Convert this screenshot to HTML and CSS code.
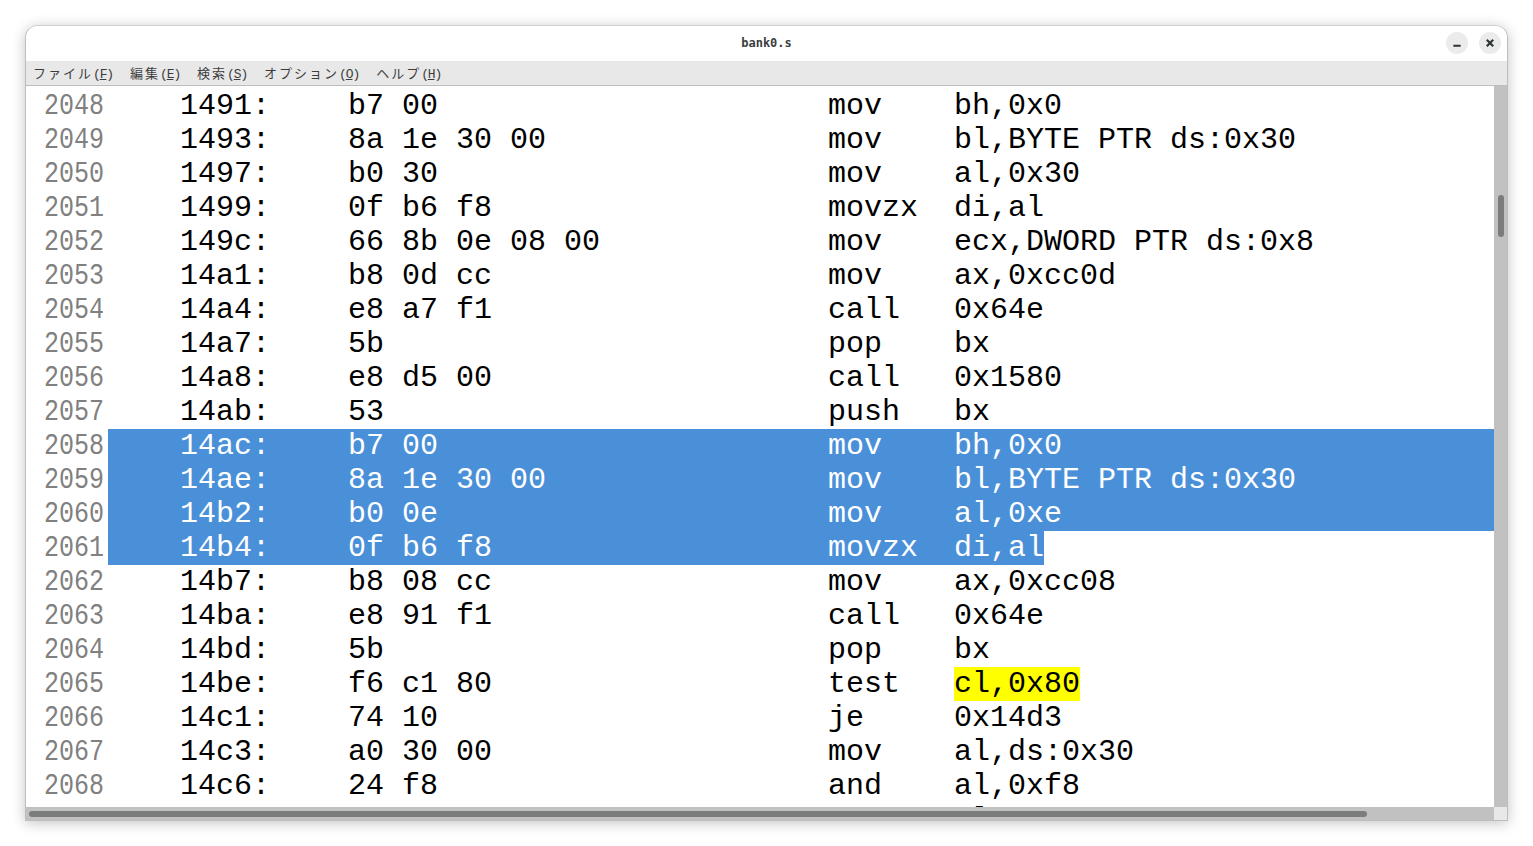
FILE: index.html
```
<!DOCTYPE html>
<html lang="ja">
<head>
<meta charset="utf-8">
<title>bank0.s</title>
<link rel="stylesheet" href="styles.css">
</head>
<body>
<div class="window">
  <header class="titlebar">
    <div class="title">bank0.s</div>
    <div class="controls">
      <button class="ctl"><svg width="24" height="24" viewBox="0 0 24 24"><path d="M8 15h8" stroke="#2e3436" stroke-width="2"/></svg></button>
      <button class="ctl"><svg width="24" height="24" viewBox="0 0 24 24"><path d="M8.5 8.5l7 7M15.5 8.5l-7 7" stroke="#2e3436" stroke-width="2.4"/></svg></button>
    </div>
  </header>
  <nav class="menubar">
    <span class="menu"><span class="jp">ファイル</span>(<u>F</u>)</span>
    <span class="menu"><span class="jp">編集</span>(<u>E</u>)</span>
    <span class="menu"><span class="jp">検索</span>(<u>S</u>)</span>
    <span class="menu"><span class="jp">オプション</span>(<u>O</u>)</span>
    <span class="menu"><span class="jp">ヘルプ</span>(<u>H</u>)</span>
  </nav>
  <div class="body">
    <main class="editor">
      <div class="row"><span class="ln"><span>2048</span></span><span class="code">    1491:	b7 00                		mov    bh,0x0</span></div>
      <div class="row"><span class="ln"><span>2049</span></span><span class="code">    1493:	8a 1e 30 00          		mov    bl,BYTE PTR ds:0x30</span></div>
      <div class="row"><span class="ln"><span>2050</span></span><span class="code">    1497:	b0 30                		mov    al,0x30</span></div>
      <div class="row"><span class="ln"><span>2051</span></span><span class="code">    1499:	0f b6 f8             		movzx  di,al</span></div>
      <div class="row"><span class="ln"><span>2052</span></span><span class="code">    149c:	66 8b 0e 08 00       		mov    ecx,DWORD PTR ds:0x8</span></div>
      <div class="row"><span class="ln"><span>2053</span></span><span class="code">    14a1:	b8 0d cc             		mov    ax,0xcc0d</span></div>
      <div class="row"><span class="ln"><span>2054</span></span><span class="code">    14a4:	e8 a7 f1             		call   0x64e</span></div>
      <div class="row"><span class="ln"><span>2055</span></span><span class="code">    14a7:	5b                   		pop    bx</span></div>
      <div class="row"><span class="ln"><span>2056</span></span><span class="code">    14a8:	e8 d5 00             		call   0x1580</span></div>
      <div class="row"><span class="ln"><span>2057</span></span><span class="code">    14ab:	53                   		push   bx</span></div>
      <div class="row"><span class="ln"><span>2058</span></span><span class="code sel">    14ac:	b7 00                		mov    bh,0x0</span></div>
      <div class="row"><span class="ln"><span>2059</span></span><span class="code sel">    14ae:	8a 1e 30 00          		mov    bl,BYTE PTR ds:0x30</span></div>
      <div class="row"><span class="ln"><span>2060</span></span><span class="code sel">    14b2:	b0 0e                		mov    al,0xe</span></div>
      <div class="row"><span class="ln"><span>2061</span></span><span class="code"><span class="sel-end">    14b4:	0f b6 f8             		movzx  di,al</span></span></div>
      <div class="row"><span class="ln"><span>2062</span></span><span class="code">    14b7:	b8 08 cc             		mov    ax,0xcc08</span></div>
      <div class="row"><span class="ln"><span>2063</span></span><span class="code">    14ba:	e8 91 f1             		call   0x64e</span></div>
      <div class="row"><span class="ln"><span>2064</span></span><span class="code">    14bd:	5b                   		pop    bx</span></div>
      <div class="row"><span class="ln"><span>2065</span></span><span class="code">    14be:	f6 c1 80             		test   <span class="match">cl,0x80</span></span></div>
      <div class="row"><span class="ln"><span>2066</span></span><span class="code">    14c1:	74 10                		je     0x14d3</span></div>
      <div class="row"><span class="ln"><span>2067</span></span><span class="code">    14c3:	a0 30 00             		mov    al,ds:0x30</span></div>
      <div class="row"><span class="ln"><span>2068</span></span><span class="code">    14c6:	24 f8                		and    al,0xf8</span></div>
      <div class="row"><span class="ln"><span>2069</span></span><span class="code">    14c8:	0c 0e                		or     al,0xe</span></div>
    </main>
    <div class="vscroll"><div class="vthumb"></div></div>
    <div class="hscroll"><div class="hthumb"></div></div>
    <div class="corner"></div>
  </div>
</div>
</body>
</html>
```
FILE: styles.css
```
html, body { margin: 0; height: 100%; background: #fff; overflow: hidden; }
body { padding: 25px; box-sizing: border-box; }
.window {
  height: 796px;
  box-sizing: border-box;
  display: flex;
  flex-direction: column;
  border: 1px solid #bdbdbd;
  border-top-color: #d0d0d0;
  border-radius: 13px 13px 0 0;
  background: #fff;
  box-shadow: 0 2px 14px rgba(0, 0, 0, .24);
  overflow: hidden;
}
.titlebar {
  height: 35px;
  flex: none;
  box-sizing: border-box;
  padding-bottom: 2px;
  display: flex;
  align-items: center;
  justify-content: center;
  background: #fff;
  position: relative;
}
.title {
  font: bold 12px "DejaVu Sans Mono", monospace;
  color: #3a3f41;
}
.controls {
  position: absolute;
  right: 6px;
  top: 6px;
  display: flex;
  gap: 11px;
}
.ctl {
  width: 22px;
  height: 22px;
  padding: 0;
  border: 0;
  border-radius: 50%;
  background: #ebebeb;
  display: flex;
  align-items: center;
  justify-content: center;
}
.menubar {
  height: 25px;
  flex: none;
  box-sizing: border-box;
  padding-bottom: 1px;
  border-bottom: 1px solid #bdbdbd;
  background: #e8e8e8;
  display: flex;
  align-items: center;
  gap: 17px;
  padding-left: 7px;
  font: 13px "Liberation Mono", monospace;
  letter-spacing: -1.13px;
  color: #3d3d3d;
}
.menu { white-space: nowrap; }
.jp {
  font: 13px "Noto Sans CJK JP", sans-serif;
  letter-spacing: 2px;
}
.body {
  flex: 1;
  min-height: 0;
  display: grid;
  grid-template-columns: 1fr 13px;
  grid-template-rows: 1fr 13px;
}
.editor {
  overflow: hidden;
  padding-top: 3px;
  min-width: 0;
  font: 30px/34px "Liberation Mono", monospace;
  color: #000;
}
.row {
  display: flex;
  height: 34px;
}
.ln {
  flex: none;
  width: 82px;
  box-sizing: border-box;
  padding-left: 18px;
  color: #808080;
}
.ln span {
  display: inline-block;
  transform: scaleX(.8333);
  transform-origin: 0 50%;
}
.code {
  flex: 1;
  white-space: pre;
  tab-size: 80px;
}
.sel { background: #4a90d9; color: #fff; }
.sel-end { background: #4a90d9; color: #fff; display: inline-block; height: 34px; }
.match { background: #ffff00; display: inline-block; height: 34px; }
.vscroll {
  background: #c0c1c0;
  position: relative;
}
.vthumb {
  position: absolute;
  left: 4px;
  top: 109px;
  width: 6px;
  height: 42px;
  border-radius: 3px;
  background: #7b7d7d;
}
.hscroll {
  background: #c0c1c0;
  position: relative;
}
.hthumb {
  position: absolute;
  left: 3px;
  top: 4px;
  width: 1338px;
  height: 6px;
  border-radius: 3px;
  background: #7b7d7d;
}
.corner { background: #e8e8e8; }
```
